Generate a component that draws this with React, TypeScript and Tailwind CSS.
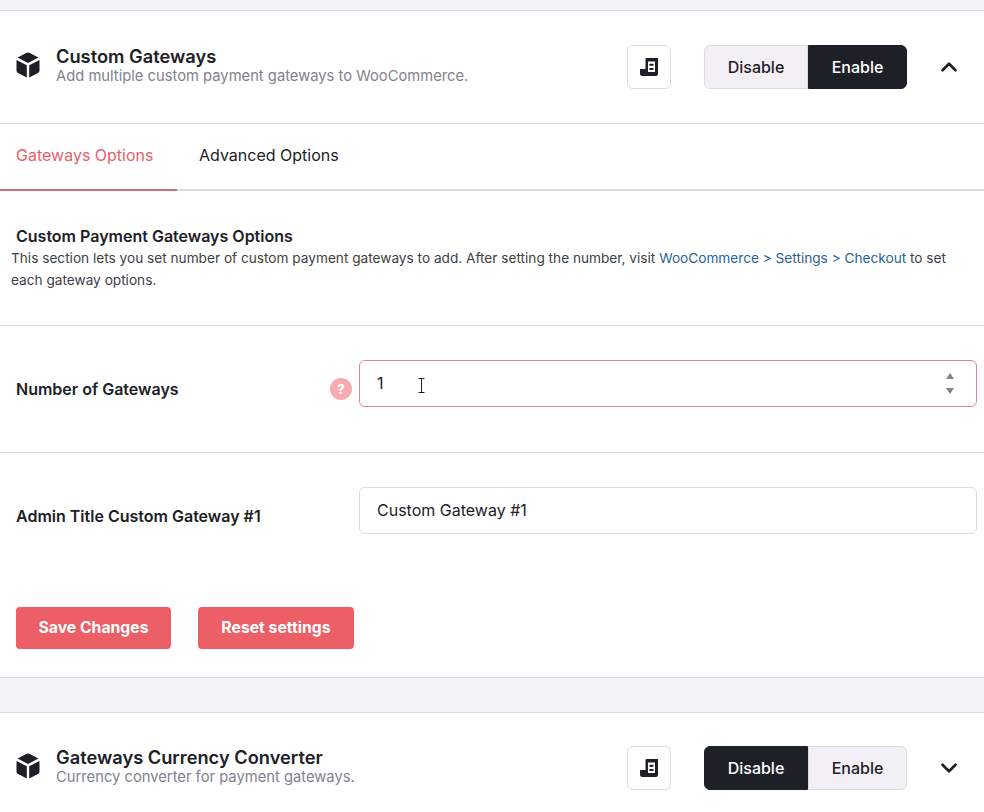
import { ChevronDown, ChevronUp } from "lucide-react";

function CubeIcon() {
  return (
    <svg width="24" height="26" viewBox="0 0 24 26" className="mb-1 shrink-0">
      <path d="M10.8 0.8 Q12 0.2 13.2 0.8 L22.5 5.6 L12 11 L1.5 5.6 Z" fill="#1d2127" />
      <path d="M0.5 8 L10.8 13.2 L10.8 25.5 L2 21 Q0.5 20.2 0.5 18.6 Z" fill="#1d2127" />
      <path d="M23.5 8 L13.2 13.2 L13.2 25.5 L22 21 Q23.5 20.2 23.5 18.6 Z" fill="#1d2127" />
    </svg>
  );
}

function DocIcon() {
  return (
    <svg width="18" height="18" viewBox="0 0 18 18">
      <path
        d="M5.5 1 Q5.5 0 6.5 0 L18 0 L18 16 Q18 18 16 18 L2.5 18 Q0 18 0 15.5 L0 11 L5.5 11 Z"
        fill="#1d2127"
      />
      <rect x="8" y="3.5" width="7" height="10.5" fill="#fff" />
      <rect x="9.5" y="5.8" width="4" height="2" fill="#1d2127" />
      <rect x="9.5" y="10" width="4" height="2" fill="#1d2127" />
    </svg>
  );
}

function ModuleHeader({
  title,
  desc,
  enabled,
  open,
  height,
}: {
  title: string;
  desc: string;
  enabled: boolean;
  open: boolean;
  height: string;
}) {
  const on = "bg-[#1d2127] text-white border-[#1d2127]";
  const off = "bg-[#f2f0f5] text-[#1d2127] border-[#dcdce0]";
  return (
    <div className={`flex items-center bg-white pl-4 pr-[22px] ${height}`}>
      <CubeIcon />
      <div className="mb-[5px] ml-4 flex-1">
        <div className="text-[18.25px] leading-[22px] font-semibold text-[#1d2127]">{title}</div>
        <div className="text-[14.75px] leading-[18px] text-[#82828c]">{desc}</div>
      </div>
      <div className="flex h-11 w-11 items-center justify-center rounded-md border border-[#dcdce0] bg-white">
        <DocIcon />
      </div>
      <div className="ml-[33px] flex h-11 text-base font-medium">
        <div className={`flex w-[104px] items-center justify-center rounded-l-md border ${enabled ? off : on}`}>
          Disable
        </div>
        <div className={`flex w-[99px] items-center justify-center rounded-r-md border ${enabled ? on : off}`}>
          Enable
        </div>
      </div>
      <div className="ml-[29px] text-[#1d2127]">
        {open ? <ChevronUp size={26} strokeWidth={2.5} /> : <ChevronDown size={26} strokeWidth={2.5} />}
      </div>
    </div>
  );
}

export default function App() {
  return (
    <div className="min-h-[812px] bg-[#f3f2f6] pt-[10px] font-['Inter',sans-serif] text-[#1d2127]">
      <div className="border-y border-[#dcdce0] bg-white">
        <ModuleHeader
          title="Custom Gateways"
          desc="Add multiple custom payment gateways to WooCommerce."
          enabled
          open
          height="h-[112px]"
        />

        <div className="flex h-[68px] border-t border-b-2 border-t-[#dcdce0] border-b-[#dcdce0] text-base">
          <div className="-mb-[2px] flex w-[177px] items-center border-b-2 border-[#cf6b72] pb-1 pl-4 text-[#e8606a]">
            Gateways Options
          </div>
          <div className="flex items-center pb-1 pl-[22px]">Advanced Options</div>
        </div>

        <div className="h-[135px] border-b border-[#dcdce0] pt-[35px]">
          <div className="pl-4 text-base leading-5 font-semibold">Custom Payment Gateways Options</div>
          <p className="mt-[1px] pr-6 pl-[11px] text-[13.65px] leading-[22px] text-[#3c4148]">
            This section lets you set number of custom payment gateways to add. After setting the number, visit{" "}
            <span className="text-[#2b6298]">WooCommerce &gt; Settings &gt; Checkout</span> to set each gateway options.
          </p>
        </div>

        <div className="flex h-[127px] items-start border-b border-[#dcdce0] pt-[34px] pr-[7px] pl-4">
          <div className="flex-1 pt-[17px] text-base font-semibold">Number of Gateways</div>
          <div className="mt-[18px] mr-[7px] flex h-[22px] w-[22px] items-center justify-center rounded-full bg-[#f7aab2] text-[13px] leading-none font-extrabold text-white">
            ?
          </div>
          <div className="relative flex h-[47px] w-[618px] items-center justify-between rounded-md border border-[#d98a98] bg-white pr-[22px] pl-[17px] text-base">
            <span className="-mt-[1px]">1</span>
            <svg width="8" height="21" viewBox="0 0 8 21" fill="#82828c">
              <path d="M4 0 L8 6 L0 6 Z" />
              <path d="M0 15 L8 15 L4 21 Z" />
            </svg>
            {/* text cursor sitting over the input */}
            <svg className="absolute top-[17px] left-[58px]" width="7" height="15" viewBox="0 0 7 15" fill="none" stroke="#1d2127">
              <path d="M0.5 0.5 H6.5 M3.5 0.5 V14.5 M0.5 14.5 H6.5" />
            </svg>
          </div>
        </div>

        <div className="flex h-[120px] pt-[34px] pr-[7px] pl-4">
          <div className="flex-1 pt-[17px] text-base font-semibold">Admin Title Custom Gateway #1</div>
          <div className="flex h-[47px] w-[618px] items-center rounded-md border border-[#dcdce0] bg-white pb-[2px] pl-[17px] text-base">
            Custom Gateway #1
          </div>
        </div>

        <div className="flex h-[104px] items-start gap-[27px] pt-[34px] pl-4 text-[15.75px] font-bold text-white">
          <button className="flex h-[42px] w-[155px] items-center justify-center rounded bg-[#ed5f66]">
            Save Changes
          </button>
          <button className="flex h-[42px] w-[156px] items-center justify-center rounded bg-[#ed5f66]">
            Reset settings
          </button>
        </div>
      </div>

      <div className="mt-[34px] border-t border-[#dcdce0] bg-white">
        <ModuleHeader
          title="Gateways Currency Converter"
          desc="Currency converter for payment gateways."
          enabled={false}
          open={false}
          height="h-[110px]"
        />
      </div>
    </div>
  );
}
